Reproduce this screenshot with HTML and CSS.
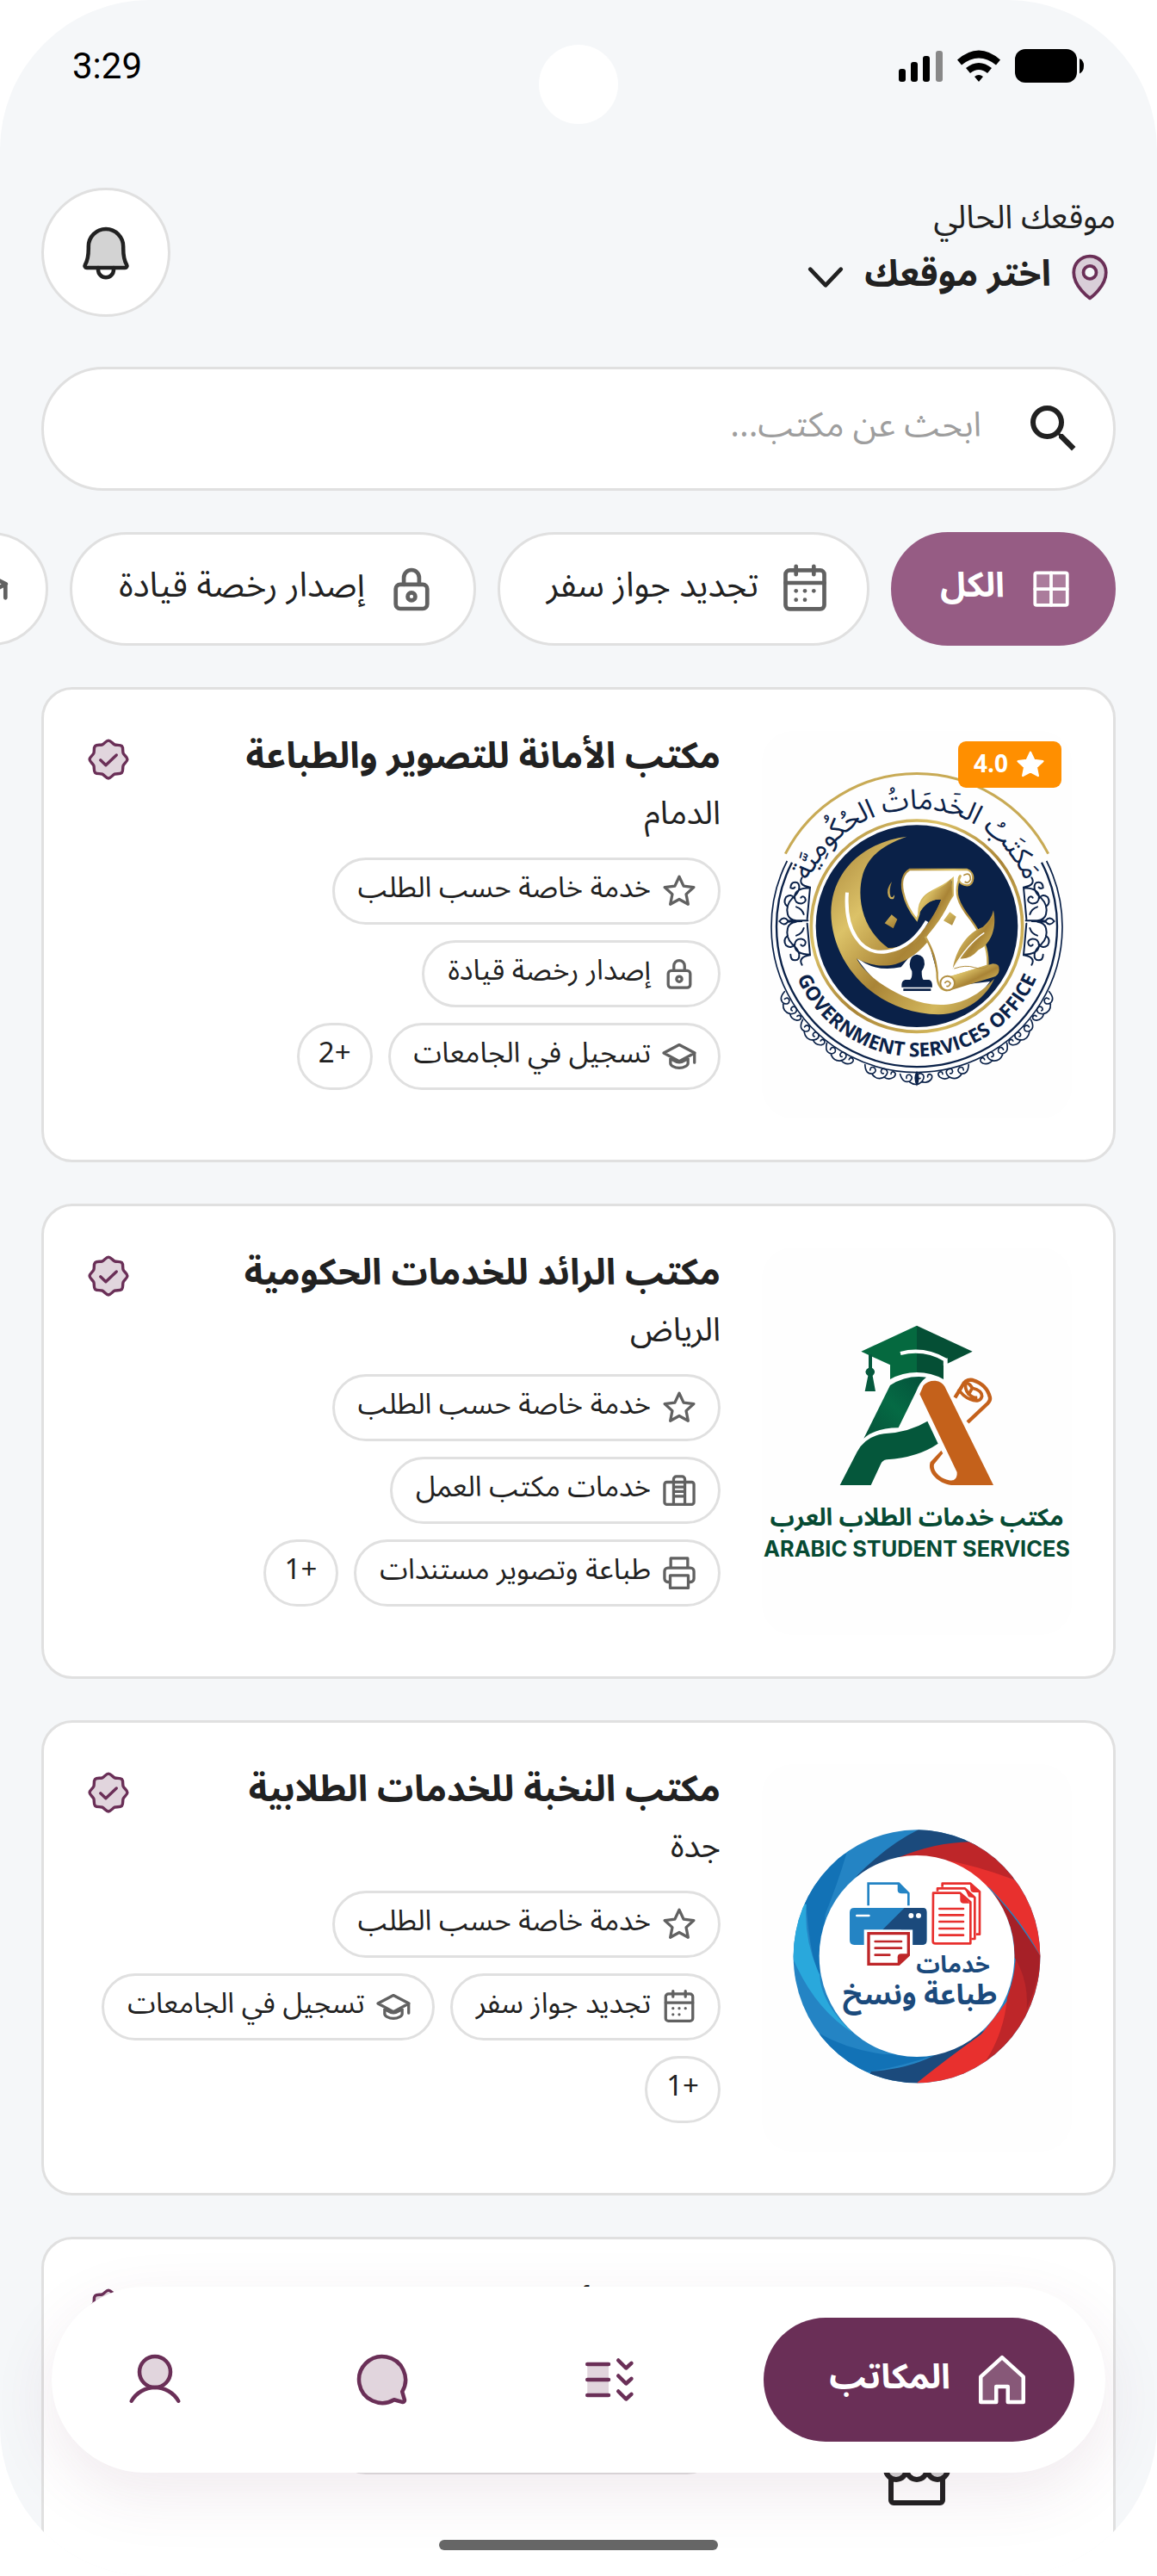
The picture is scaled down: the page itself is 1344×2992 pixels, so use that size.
FILE: index.html
```html
<!DOCTYPE html>
<html lang="ar" dir="rtl">
<head>
    <meta charset="UTF-8">
    <meta name="viewport" content="width=device-width, initial-scale=1.0">
    <title>المكاتب</title>
    <link rel="stylesheet" href="styles.css">
</head>
<body>
    <!-- icon sprite -->
    <svg class="sprite" aria-hidden="true">
        <symbol id="i-bell" viewBox="0 0 256 256">
            <path class="tone" d="M56.2,104a71.9,71.9,0,0,1,72.3-72c39.6.3,71.3,33.2,71.3,72.9V112c0,35.8,7.5,56.6,14.1,68a8,8,0,0,1-6.9,12H49a8,8,0,0,1-6.9-12.1c6.6-11.3,14.1-32.1,14.1-67.9Z"/>
            <path d="M56.2,104a71.9,71.9,0,0,1,72.3-72c39.6.3,71.3,33.2,71.3,72.9V112c0,35.8,7.5,56.6,14.1,68a8,8,0,0,1-6.9,12H49a8,8,0,0,1-6.9-12.1c6.6-11.3,14.1-32.1,14.1-67.9Z"/>
            <path d="M160,192v8a32,32,0,0,1-64,0v-8"/>
        </symbol>
        <symbol id="i-pin" viewBox="0 0 256 256">
            <path class="tone" fill-rule="evenodd" d="M208,104c0,72-80,128-80,128S48,176,48,104a80,80,0,0,1,160,0ZM128,72a32,32,0,1,0,0,64a32,32,0,0,0,0-64Z"/>
            <path d="M208,104c0,72-80,128-80,128S48,176,48,104a80,80,0,0,1,160,0Z"/>
            <circle cx="128" cy="104" r="32"/>
        </symbol>
        <symbol id="i-caret" viewBox="0 0 256 256"><path stroke-width="20" d="M204,88l-76,80L52,88"/></symbol>
        <symbol id="i-search" viewBox="0 0 24 24">
            <path class="solid" d="M15.5 14h-.79l-.28-.27A6.471 6.471 0 0 0 16 9.5 6.5 6.5 0 1 0 9.5 16c1.61 0 3.09-.59 4.23-1.57l.27.28v.79l5 4.99L20.49 19l-4.99-5zm-6 0C7.01 14 5 11.99 5 9.5S7.01 5 9.5 5 14 7.01 14 9.5 11.99 14 9.5 14z"/>
        </symbol>
        <symbol id="i-grid" viewBox="0 0 256 256">
            <rect class="tone" x="48" y="48" width="160" height="160" rx="8"/>
            <rect x="48" y="48" width="160" height="160" rx="8"/>
            <path d="M128,48V208M48,128H208"/>
        </symbol>
        <symbol id="i-calendar" viewBox="0 0 256 256">
            <rect x="32" y="36" width="192" height="192" rx="20"/>
            <path d="M84,16V56M172,16V56M32,98H224"/>
            <g class="solid"><circle cx="84" cy="138" r="10"/><circle cx="128" cy="138" r="10"/><circle cx="172" cy="138" r="10"/><circle cx="84" cy="182" r="10"/><circle cx="128" cy="182" r="10"/></g>
        </symbol>
        <symbol id="i-lock" viewBox="0 0 256 256">
            <rect x="50" y="106" width="156" height="120" rx="22"/>
            <path d="M90,106V72a38,38,0,0,1,76,0V106"/>
            <circle cx="128" cy="166" r="19"/>
        </symbol>
        <symbol id="i-cap" viewBox="0 0 256 256">
            <path d="M18,104L128,46L238,104L128,162ZM66,130V176c0,16,28,34,62,34s62-18,62-34V130M236,104V172"/>
            <path d="M70,148c12,0,26,22,58,22s46-22,58-22"/>
        </symbol>
        <symbol id="i-star" viewBox="0 0 256 256"><path d="M128,26L159,92L231,101L177,150L191,221L128,186L65,221L79,150L25,101L97,92Z"/></symbol>
        <symbol id="i-star-fill" viewBox="0 0 256 256"><path fill="currentColor" d="M128,26L159,92L231,101L177,150L191,221L128,186L65,221L79,150L25,101L97,92Z"/></symbol>
        <symbol id="i-office" viewBox="0 0 256 256">
            <rect x="24" y="70" width="208" height="158" rx="16"/>
            <path d="M88,70V50a20,20,0,0,1,20-20h40a20,20,0,0,1,20,20V70M88,70V228M168,70V228M88,104H168M88,136H168M88,170H168"/>
        </symbol>
        <symbol id="i-printer" viewBox="0 0 256 256">
            <path d="M68,92V24H188V92M62,192H48a24,24,0,0,1-24-24V116a24,24,0,0,1,24-24H208a24,24,0,0,1,24,24v52a24,24,0,0,1-24,24H194"/>
            <rect x="64" y="146" width="128" height="88"/>
        </symbol>
        <symbol id="i-seal" viewBox="0 0 256 256">
            <path class="tone" d="M54.5,201.5c-9.2-9.2-3.1-28.5-7.8-39.8S24,140.5,24,128s17.8-22,22.7-33.7-1.4-30.6,7.8-39.8S83,51.4,94.3,46.7,115.5,24,128,24s22,17.8,33.7,22.7,30.6-1.4,39.8,7.8,3.1,28.5,7.8,39.8S232,115.5,232,128s-17.8,22-22.7,33.7,1.4,30.6-7.8,39.8-28.5,3.1-39.8,7.8S140.5,232,128,232s-22-17.8-33.7-22.7S63.7,210.7,54.5,201.5Z"/>
            <path d="M54.5,201.5c-9.2-9.2-3.1-28.5-7.8-39.8S24,140.5,24,128s17.8-22,22.7-33.7-1.4-30.6,7.8-39.8S83,51.4,94.3,46.7,115.5,24,128,24s22,17.8,33.7,22.7,30.6-1.4,39.8,7.8,3.1,28.5,7.8,39.8S232,115.5,232,128s-17.8,22-22.7,33.7,1.4,30.6-7.8,39.8-28.5,3.1-39.8,7.8S140.5,232,128,232s-22-17.8-33.7-22.7S63.7,210.7,54.5,201.5Z"/>
            <path d="M172,104L113.3,160L84,132"/>
        </symbol>
        <symbol id="i-store" viewBox="0 0 256 256">
            <path class="tone" d="M96,96v16a32,32,0,0,1-64,0V96ZM224,96v16a32,32,0,0,1-64,0V96Z"/>
            <path d="M48,139.6V208a8,8,0,0,0,8,8H200a8,8,0,0,0,8-8V139.6M54,40H202a8.1,8.1,0,0,1,7.7,5.8L224,96H32L46.3,45.8A8.1,8.1,0,0,1,54,40ZM96,96v16a32,32,0,0,1-64,0V96M160,96v16a32,32,0,0,1-64,0V96M224,96v16a32,32,0,0,1-64,0V96"/>
        </symbol>
        <symbol id="i-house" viewBox="0 0 256 256">
            <path class="tone" d="M40,216V116L128,36L216,116V216H152V156H104V216Z"/>
            <path d="M40,220V116L128,36L216,116V220H152V156H104V220Z"/>
        </symbol>
        <symbol id="i-checks" viewBox="0 0 256 256">
            <rect class="tone" x="40" y="64" width="88" height="128"/>
            <path d="M40,64H128M40,128H128M40,192H128M168,48L200,80L222,60M168,112L200,144L222,124M168,176L200,208L222,188"/>
        </symbol>
        <symbol id="i-chat" viewBox="0 0 256 256">
            <path class="tone" d="M210.6,177A95.9,95.9,0,1,0,177,210.6L210.2,220a7.9,7.9,0,0,0,9.8-9.8Z"/>
            <path d="M210.6,177A95.9,95.9,0,1,0,177,210.6L210.2,220a7.9,7.9,0,0,0,9.8-9.8Z"/>
        </symbol>
        <symbol id="i-user" viewBox="0 0 256 256">
            <circle class="tone" cx="128" cy="96" r="64"/>
            <circle cx="128" cy="96" r="64"/>
            <path d="M31,216a112,112,0,0,1,194,0"/>
        </symbol>
    </svg>

    <div class="screen">
        <div class="status-bar" dir="ltr">
            <span class="clock">3:29</span>
            <span class="camera"></span>
            <svg class="status-icons" viewBox="0 0 216 40">
                <rect x="0" y="23" width="8" height="15" rx="3"/>
                <rect x="14" y="15" width="8" height="23" rx="3"/>
                <rect x="28" y="8" width="8" height="30" rx="3"/>
                <rect x="43" y="2" width="8" height="36" rx="3" fill="#888"/>
                <path d="M68,12.500q25-22,50,0l-5,6q-20-16-40,0zM78,22q15-12,30,0l-5,6q-10-8-20,0zM88,32q5-4,10,0l-5,6z"/>
                <rect x="135" y="0" width="72" height="39" rx="12"/>
                <path d="M210,11q5,2,5,8.500t-5,9z"/>
            </svg>
        </div>

        <header class="header">
            <div class="location">
                <span class="location-label">موقعك الحالي</span>
                <button type="button" class="location-picker">
                    <svg class="icon icon-60 purple"><use href="#i-pin"/></svg>
                    <span>اختر موقعك</span>
                    <svg class="icon icon-60"><use href="#i-caret"/></svg>
                </button>
            </div>
            <button type="button" class="bell" aria-label="الإشعارات">
                <svg class="icon icon-72"><use href="#i-bell"/></svg>
            </button>
        </header>

        <label class="search">
            <svg class="icon icon-72"><use href="#i-search"/></svg>
            <input type="text" placeholder="ابحث عن مكتب..." aria-label="بحث">
        </label>

        <div class="filters">
            <button type="button" class="filter active"><svg class="icon icon-60"><use href="#i-grid"/></svg><span>الكل</span></button>
            <button type="button" class="filter"><svg class="icon icon-60"><use href="#i-calendar"/></svg><span>تجديد جواز سفر</span></button>
            <button type="button" class="filter"><svg class="icon icon-60"><use href="#i-lock"/></svg><span>إصدار رخصة قيادة</span></button>
            <button type="button" class="filter"><svg class="icon icon-60"><use href="#i-cap"/></svg><span>تسجيل في الجامعات</span></button>
        </div>

        <main class="offices">
            <article class="card">
                <div class="photo">
                    <svg class="logo" viewBox="75 87 1080 1350" role="img" aria-label="Government Services Office">
                        <defs>
                            <linearGradient id="gold" x1="0" y1="0" x2="1" y2="1">
                                <stop offset="0" stop-color="#a8853a"/>
                                <stop offset=".3" stop-color="#dcc268"/>
                                <stop offset=".55" stop-color="#a98436"/>
                                <stop offset=".8" stop-color="#d3b75c"/>
                                <stop offset="1" stop-color="#9c7a35"/>
                            </linearGradient>
                            <path id="arc-top" d="M207,767A408,408,0,0,1,1023,767"/>
                            <path id="arc-bottom" d="M160,767A455,455,0,0,0,1070,767"/>
                            <g id="swirl" fill="none" stroke="#0a2148" stroke-width="5" stroke-linecap="round">
                                <path d="M-58,2q10,34,34,24q14-12,0-22q-14-2-12,12M-24,30q22,16,42-2q14-20-2-28q-16-2-14,12q4,8,10,4M16,28q20,8,34-8q8-14-4-18q-10,0-8,10"/>
                            </g>
                            <g id="side" fill="none" stroke="#0a2148" stroke-width="6" stroke-linecap="round">
                                <path d="M215,598q-16,26,28,34l-10,110M175,634q0-20,16-20t14,22q-4,18-24,34q-24,24-16,56q4,18,30,22h40M176,634q10,4,14-2M243,634q-50,0-54,30q0,26,26,24q18-6,10-20q-8-8-14,0M165,700q-18-14-6-34q18-14,30,4M195,700q20,6,26,26M136,750q16-20,30-2q10,0,50,2q-40,0-50,2q-14,18-30-2M215,902q-16-26,28-34l-10-110M175,866q0,20,16,20t14-22q-4-18-24-34q-24-24-16-56q4-18,30-22M243,866q-50,0-54-30q0-26,26-24q18,6,10,20q-8,8-14,0M165,800q-18,14-6,34q18,14,30-4M195,800q20-6,26-26"/>
                            </g>
                        </defs>
                        <path d="M157,515A515,515,0,0,1,1073,515" fill="none" stroke="#c8aa55" stroke-width="9"/>
                        <g fill="none" stroke="#0a2148">
                            <path d="M163,540A507,507,0,1,0,1067,540" stroke-width="5"/>
                            <path d="M180,545A489,489,0,1,0,1050,545" stroke-width="7"/>
                        </g>
                        <use href="#side"/>
                        <use href="#side" transform="translate(1230 0) scale(-1 1)"/>
                        <g transform="translate(615 765)">
                            <use href="#swirl" transform="rotate(57) translate(0 510)"/>
                            <use href="#swirl" transform="rotate(44) translate(0 510)"/>
                            <use href="#swirl" transform="rotate(31) translate(0 510)"/>
                            <use href="#swirl" transform="rotate(14) translate(0 512)"/>
                            <use href="#swirl" transform="translate(0 516)"/>
                            <use href="#swirl" transform="scale(-1 1) rotate(14) translate(0 512)"/>
                            <use href="#swirl" transform="scale(-1 1) rotate(31) translate(0 510)"/>
                            <use href="#swirl" transform="scale(-1 1) rotate(44) translate(0 510)"/>
                            <use href="#swirl" transform="scale(-1 1) rotate(57) translate(0 510)"/>
                            <path d="M0,506q-16,24,0,54q16-30,0-54z" fill="#0a2148"/>
                        </g>
                        <circle cx="615" cy="767" r="368" fill="#fff" stroke="url(#gold)" stroke-width="11"/>
                        <circle cx="615" cy="767" r="352" fill="#0a2148"/>
                        <path d="M400,870q60,60,160,40l90-110l50,180l170-20q-60,90-210,85q-160-20-260-175z" fill="#fff"/>
                        <path d="M580,455C450,470,318,560,316,720C318,900,470,1070,690,1075C790,1072,860,1010,885,950C800,1040,720,1050,640,1035C520,1005,430,930,405,880C440,900,490,912,540,900C640,870,700,770,738,660C740,640,738,620,734,602C700,650,620,640,622,725C640,690,670,670,700,675C660,770,590,845,515,843C440,790,410,700,420,620C430,540,480,490,580,455Z" fill="url(#gold)"/>
                        <path d="M372,650C362,780,420,870,510,856C580,845,620,800,650,750" fill="none" stroke="#fff" stroke-width="12"/>
                        <path d="M590,570H790C820,580,815,625,790,625C760,622,755,600,768,590C740,650,760,690,800,740C850,810,865,850,862,905L735,945Q700,960,715,990C690,985,685,960,686,930C680,880,670,850,645,805L740,660V602C690,650,620,640,622,725L615,745C570,690,540,600,590,570Z" fill="#fff" stroke="url(#gold)" stroke-width="7"/>
                        <path d="M734,602C700,650,620,640,622,725C640,690,670,670,700,675C670,750,630,800,600,830L650,800C690,760,725,700,738,660Z" fill="url(#gold)"/>
                        <path d="M720,945L880,898Q905,898,902,920Q900,940,880,945L725,993Q740,960,720,945Z" fill="url(#gold)"/>
                        <circle cx="722" cy="966" r="25" fill="#fff" stroke="#b18e40" stroke-width="6"/>
                        <path d="M712,966q10-14,20,0q-4,14-14,10" fill="none" stroke="#b18e40" stroke-width="5"/>
                        <path d="M778,590q24-14,24,14q-8,18-20,8" fill="none" stroke="#b18e40" stroke-width="5"/>
                        <path d="M740,918C750,850,790,790,845,770Q875,745,882,712C895,770,875,830,830,850Q800,885,765,880Z" fill="url(#gold)"/>
                        <path d="M740,918Q790,830,850,790" fill="none" stroke="#fff" stroke-width="4"/>
                        <path d="M745,915q40-14,70-4t50-6" fill="none" stroke="#b18e40" stroke-width="3"/>
                        <path d="M527,727l20,16-14,32-30-18zM730,718l22,16-14,30-30-16zM528,612q-22,26-12,52q6,12,18,8q6-8,2-14q-4,14-12,6q-8-20,4-52z" fill="url(#gold)"/>
                        <path d="M615,866q28,2,27,34q-2,14-10,24q0,24,6,30h20q12,4,11,26H562q-2-22,12-26h18q8-8,6-30q-8-10-8-24q2-32,25-34zM568,985h96v8h-96z" fill="#0a2148"/>
                        <text class="seal-ar" text-anchor="middle"><textPath href="#arc-top" startOffset="50%">مَكتَبُ الخَدمَاتُ الحُكُومِيَّة</textPath></text>
                        <text class="seal-en" direction="ltr" text-anchor="middle"><textPath href="#arc-bottom" startOffset="50%">GOVERNMENT SERVICES OFFICE</textPath></text>
                    </svg>
                    <span class="rating"><svg class="icon icon-36"><use href="#i-star-fill"/></svg>4.0</span>
                </div>
                <div class="info">
                    <div class="title-row">
                        <h2>مكتب الأمانة للتصوير والطباعة</h2>
                        <svg class="icon icon-54 purple"><use href="#i-seal"/></svg>
                    </div>
                    <p class="city">الدمام</p>
                    <ul class="tags">
                        <li><svg class="icon icon-42"><use href="#i-star"/></svg><span>خدمة خاصة حسب الطلب</span></li>
                        <li><svg class="icon icon-42"><use href="#i-lock"/></svg><span>إصدار رخصة قيادة</span></li>
                        <li><svg class="icon icon-42"><use href="#i-cap"/></svg><span>تسجيل في الجامعات</span></li>
                        <li class="more"><span>+2</span></li>
                    </ul>
                </div>
            </article>

            <article class="card">
                <div class="photo">
                    <svg class="logo" viewBox="75 -93 1080 1350" role="img" aria-label="Arabic Student Services">
                        <defs>
                            <linearGradient id="leg" x1="0" y1="1" x2="1" y2="0">
                                <stop offset="0" stop-color="#065239"/>
                                <stop offset=".5" stop-color="#056a44"/>
                                <stop offset="1" stop-color="#04503a"/>
                            </linearGradient>
                        </defs>
                        <path d="M615,179L421,269L522,316V366Q565,342,615,342Z" fill="#05693f"/>
                        <path d="M615,179L809,269L722,311V292L708,299V366Q665,342,615,342Z" fill="#054f35"/>
                        <path d="M558,276Q640,255,714,298V318" fill="none" stroke="#fff" stroke-width="13"/>
                        <path d="M447,280H459V326Q470,334,468,343Q466,350,461,354L471,408H434L445,354Q436,348,436,340Q438,330,447,326Z" fill="#05593d"/>
                        <path d="M522,387Q580,350,648,359Q625,375,612,410L551,535Q470,536,430,572Z" fill="url(#leg)"/>
                        <path d="M347,735L407,619Q435,565,500,556Q590,550,652,512L689,590Q620,638,510,646Q495,648,489,662L455,735Z" fill="#05573b"/>
                        <path d="M625,418L638,388Q652,370,680,371Q703,374,712,391L882,735H735C690,730,650,690,662,655L700,614L706,624L675,662C668,690,710,722,742,718Q757,710,755,690Z" fill="#c4611b"/>
                        <path d="M748,430L774,388Q785,365,810,369Q860,385,870,430Q872,440,862,450L792,516" fill="none" stroke="#c4611b" stroke-width="13"/>
                        <path d="M760,400Q775,425,800,435Q835,450,842,425Q842,405,808,397L796,418Q812,432,826,430M808,395Q800,382,786,376Q780,400,796,418" fill="none" stroke="#c4611b" stroke-width="11"/>
                        <text class="student-ar" x="615" y="876" text-anchor="middle">مكتب خدمات الطلاب العرب</text>
                        <text class="student-en" x="615" y="983" direction="ltr" text-anchor="middle">ARABIC STUDENT SERVICES</text>
                    </svg>
                </div>
                <div class="info">
                    <div class="title-row">
                        <h2>مكتب الرائد للخدمات الحكومية</h2>
                        <svg class="icon icon-54 purple"><use href="#i-seal"/></svg>
                    </div>
                    <p class="city">الرياض</p>
                    <ul class="tags">
                        <li><svg class="icon icon-42"><use href="#i-star"/></svg><span>خدمة خاصة حسب الطلب</span></li>
                        <li><svg class="icon icon-42"><use href="#i-office"/></svg><span>خدمات مكتب العمل</span></li>
                        <li><svg class="icon icon-42"><use href="#i-printer"/></svg><span>طباعة وتصوير مستندات</span></li>
                        <li class="more"><span>+1</span></li>
                    </ul>
                </div>
            </article>

            <article class="card">
                <div class="photo">
                    <svg class="logo" viewBox="15 -93 1080 1350" role="img" aria-label="خدمات طباعة ونسخ">
                        <defs>
                            <clipPath id="ring"><ellipse cx="555" cy="577" rx="430" ry="441"/></clipPath>
                            <clipPath id="printer-body"><path d="M337,408H575Q590,408,590,424V520Q590,537,574,537H541V484H371V537H337Q321,537,321,520V424Q321,408,337,408Z"/></clipPath>
                        </defs>
                        <g clip-path="url(#ring)">
                            <rect x="100" y="100" width="910" height="940" fill="#2484c4"/>
                            <path d="M560,100L760,100V190L500,230Q410,250,340,302Q450,190,560,136Z" fill="#1b4a7c"/>
                            <path d="M310,218L100,218V395H170Q180,560,216,650L236,430Q280,320,310,218Z" fill="#1272b6"/>
                            <path d="M170,395H100V600L126,590Q200,760,330,842Q220,740,216,640Q160,520,170,395Z" fill="#29a8dc"/>
                            <path d="M215,845L200,1000L395,978Q500,960,620,920L440,918Q310,900,215,845Z" fill="#1272b6"/>
                            <path d="M395,978L380,1040H555L800,830L610,925Q520,970,395,978Z" fill="#1b4a7c"/>
                            <path d="M555,1018V1060H800V940Q860,860,880,720L780,848Q650,940,555,1018Z" fill="#e8302e"/>
                            <path d="M795,942L1010,1000V575L900,560Q900,640,870,720Q860,840,795,942Z" fill="#be2629"/>
                            <path d="M985,575Q980,670,938,760Q945,660,895,580Q900,450,800,335Q890,420,985,575Z" fill="#a62027"/>
                            <path d="M895,310L1010,300V575H985Q920,450,810,340L650,238Q780,260,895,310Z" fill="#e8302e"/>
                            <path d="M740,178L800,120L895,310Q760,260,640,238L492,232Q620,180,740,178Z" fill="#be2629"/>
                        </g>
                        <ellipse cx="555" cy="576" rx="340" ry="351" fill="#fff"/>
                        <path d="M386,400V323H492L526,357V400" fill="none" stroke="#2484c4" stroke-width="8"/>
                        <path d="M488,320L528,358H502Q488,358,488,346Z" fill="#2484c4"/>
                        <g clip-path="url(#printer-body)">
                            <rect x="321" y="408" width="270" height="130" fill="#2484c4"/>
                            <path d="M512,408H600V540H500V484H436Z" fill="#1b4a7c"/>
                        </g>
                        <rect x="342" y="431" width="50" height="8" rx="4" fill="#fff"/>
                        <circle cx="535" cy="435" r="9" fill="#fff"/>
                        <circle cx="561" cy="435" r="9" fill="#fff"/>
                        <path d="M387,497H526V572L492,604H387Z" fill="#fff" stroke="#be2629" stroke-width="10"/>
                        <path d="M488,606V580Q488,568,500,568H530Z" fill="#be2629"/>
                        <path d="M410,525H501M410,548H501M410,572H460" stroke="#be2629" stroke-width="8" stroke-linecap="round"/>
                        <g fill="#fff" stroke="#e8302e" stroke-width="8" stroke-linejoin="round">
                            <path d="M644,335V323H742L774,352V500H762"/>
                            <path d="M627,350V340H722L757,372V516H745"/>
                            <path d="M612,356H706L742,388V532H620Q611,532,611,524Z"/>
                        </g>
                        <path d="M706,356L740,392H716Q706,390,706,380ZM722,340L760,374L735,370ZM740,320L778,354H752Q742,352,742,342Z" fill="#e8302e"/>
                        <path d="M634,411H717M634,433H717M634,456H717M634,480H717M634,503H717" stroke="#e8302e" stroke-width="8" stroke-linecap="round"/>
                        <text class="print-ar" x="681" y="632" font-size="82" text-anchor="middle">خدمات</text>
                        <text class="print-ar" x="566" y="745" font-size="100" text-anchor="middle">طباعة ونسخ</text>
                    </svg>
                </div>
                <div class="info">
                    <div class="title-row">
                        <h2>مكتب النخبة للخدمات الطلابية</h2>
                        <svg class="icon icon-54 purple"><use href="#i-seal"/></svg>
                    </div>
                    <p class="city">جدة</p>
                    <ul class="tags">
                        <li><svg class="icon icon-42"><use href="#i-star"/></svg><span>خدمة خاصة حسب الطلب</span></li>
                        <li><svg class="icon icon-42"><use href="#i-calendar"/></svg><span>تجديد جواز سفر</span></li>
                        <li><svg class="icon icon-42"><use href="#i-cap"/></svg><span>تسجيل في الجامعات</span></li>
                        <li class="more"><span>+1</span></li>
                    </ul>
                </div>
            </article>

            <article class="card">
                <div class="photo photo-empty">
                    <svg class="icon icon-96"><use href="#i-store"/></svg>
                </div>
                <div class="info">
                    <div class="title-row">
                        <h2>مكتب الأمل</h2>
                        <svg class="icon icon-54 purple"><use href="#i-seal"/></svg>
                    </div>
                    <p class="city">جدة</p>
                    <ul class="tags">
                        <li><svg class="icon icon-42"><use href="#i-star"/></svg><span>خدمة خاصة حسب الطلب</span></li>
                    </ul>
                </div>
            </article>
        </main>

        <nav class="tab-bar">
            <a href="#offices" class="tab active"><svg class="icon icon-72"><use href="#i-house"/></svg><span>المكاتب</span></a>
            <a href="#orders" class="tab" aria-label="الطلبات"><svg class="icon icon-72"><use href="#i-checks"/></svg></a>
            <a href="#chat" class="tab" aria-label="المحادثات"><svg class="icon icon-72"><use href="#i-chat"/></svg></a>
            <a href="#profile" class="tab" aria-label="حسابي"><svg class="icon icon-72"><use href="#i-user"/></svg></a>
        </nav>
        <div class="home-indicator"></div>
    </div>
</body>
</html>
```
FILE: styles.css
```css
* {
    box-sizing: border-box;
}

body {
    margin: 0;
    background: #fff;
    color: #212121;
    font-family: "Noto Sans Arabic", "Noto Sans", sans-serif;
}

button,
input {
    font-family: inherit;
    color: inherit;
}

button {
    cursor: pointer;
}

.sprite {
    display: none;
}

/* icons */
.icon {
    flex: none;
    fill: none;
    stroke: currentColor;
    stroke-width: 16;
    stroke-linecap: round;
    stroke-linejoin: round;
}

.icon-36 { width: 36px; height: 36px; }
.icon-42 { width: 42px; height: 42px; }
.icon-54 { width: 54px; height: 54px; }
.icon-60 { width: 60px; height: 60px; }
.icon-72 { width: 72px; height: 72px; }
.icon-96 { width: 96px; height: 96px; }

.tone {
    fill: currentColor;
    opacity: 0.2;
    stroke: none;
}

.solid {
    fill: currentColor;
    stroke: none;
}

.purple {
    color: #6a2f57;
}

/* app shell */
.screen {
    position: relative;
    height: 100vh;
    overflow: hidden;
    background: #f5f7f9;
    border-radius: 174px;
}

.status-bar {
    display: flex;
    align-items: center;
    justify-content: space-between;
    height: 154px;
    margin-bottom: 64px;
    padding: 0 84px;
    color: #000;
}

.clock {
    font-family: Roboto, sans-serif;
    font-size: 42px;
    line-height: 48px;
}

.camera {
    position: absolute;
    top: 52px;
    left: 50%;
    width: 92px;
    height: 92px;
    margin-left: -46px;
    border-radius: 50%;
    background: #fff;
}

.status-icons {
    width: 216px;
    height: 40px;
}

.header {
    display: flex;
    align-items: center;
    justify-content: space-between;
    padding: 0 48px;
}

.location {
    display: flex;
    flex-direction: column;
    align-items: flex-start;
    gap: 3px;
    padding-bottom: 6px;
}

.location-label {
    font-size: 38px;
    line-height: 60px;
}

.location-picker {
    display: flex;
    align-items: center;
    gap: 15px;
    padding: 0;
    border: 0;
    background: none;
    font-size: 42px;
    font-weight: 700;
    line-height: 66px;
}

.location-picker span,
.filter span,
.tags span,
.tab span {
    padding-bottom: 6px;
}

.bell {
    display: grid;
    place-items: center;
    width: 150px;
    height: 150px;
    padding: 0;
    border: 3px solid #e0e0e0;
    border-radius: 50%;
    background: #fff;
}

.search {
    display: flex;
    align-items: center;
    gap: 48px;
    height: 144px;
    margin: 58px 48px 48px;
    padding: 0 33px;
    border: 3px solid #e0e0e0;
    border-radius: 72px;
    background: #fff;
}

.search input {
    flex: 1;
    min-width: 0;
    padding: 0 0 6px;
    border: 0;
    outline: 0;
    background: none;
    font-size: 40px;
    line-height: 60px;
}

.search input::placeholder {
    color: #9e9e9e;
    opacity: 1;
}

.filters {
    display: flex;
    gap: 25px;
    padding: 0 48px;
    overflow: hidden;
}

.filter {
    display: flex;
    flex: none;
    align-items: center;
    gap: 24px;
    height: 132px;
    padding: 0 42px 0 54px;
    border: 3px solid #e0e0e0;
    border-radius: 66px;
    background: #fff;
    font-size: 40px;
    line-height: 60px;
}

.filter .icon {
    color: #616161;
    stroke-width: 20;
}

.filter.active {
    border-color: #965c84;
    background: #965c84;
    color: #fff;
    font-weight: 700;
}

.filter.active .icon {
    color: #fff;
    stroke-width: 16;
}

/* office cards */
.offices {
    display: flex;
    flex-direction: column;
    gap: 48px;
    padding: 48px;
}

.card {
    display: flex;
    gap: 48px;
    padding: 48px;
    border: 3px solid #e0e0e0;
    border-radius: 36px;
    background: #fff;
}

.photo {
    position: relative;
    flex: none;
    width: 360px;
    height: 450px;
    border-radius: 36px;
    background: #fefefe;
}

.photo-empty {
    display: grid;
    place-items: center;
    background: #fff;
}

.logo {
    display: block;
    width: 100%;
    height: 100%;
}

.rating {
    position: absolute;
    top: 12px;
    right: 12px;
    display: flex;
    align-items: center;
    gap: 8px;
    height: 54px;
    padding: 0 18px;
    border-radius: 9px;
    background: #ff8f00;
    color: #fff;
    font-size: 28px;
    font-weight: 700;
}

.info {
    flex: 1;
    min-width: 0;
}

.title-row {
    display: flex;
    align-items: center;
    justify-content: space-between;
    height: 66px;
}

h2 {
    margin: 0;
    padding-bottom: 6px;
    font-size: 42px;
    line-height: 66px;
    white-space: nowrap;
}

.city {
    margin: 0 0 21px;
    font-size: 38px;
    line-height: 60px;
}

.tags {
    display: flex;
    flex-wrap: wrap;
    gap: 18px;
    margin: 0;
    padding: 0;
    list-style: none;
}

.tags li {
    display: flex;
    align-items: center;
    gap: 12px;
    height: 78px;
    padding: 0 24px 0 27px;
    border: 3px solid #e0e0e0;
    border-radius: 39px;
    font-size: 33px;
    line-height: 48px;
}

.tags .more {
    padding: 0 22px;
}

.tags .icon {
    color: #616161;
    stroke-width: 20;
}

/* lettering in the logos */
.seal-ar {
    fill: #0a2148;
    font-size: 96px;
}

.seal-en {
    fill: #0a2148;
    font-family: "Open Sans", sans-serif;
    font-size: 68px;
    font-weight: 700;
}

.student-ar {
    fill: #064a33;
    font-size: 84px;
    font-weight: 700;
}

.student-en {
    fill: #064a33;
    font-family: Inter, sans-serif;
    font-size: 76px;
    font-weight: 700;
}

.print-ar {
    fill: #1b4a7c;
    font-weight: 700;
}

/* bottom bar */
.tab-bar {
    position: absolute;
    right: 60px;
    bottom: 120px;
    left: 60px;
    display: flex;
    align-items: center;
    justify-content: space-between;
    height: 216px;
    padding: 36px;
    border-radius: 108px;
    background: #fff;
    box-shadow: 0 24px 72px rgba(106, 47, 87, 0.1);
}

.tab {
    display: flex;
    align-items: center;
    gap: 24px;
    height: 144px;
    padding: 0 48px;
    border-radius: 72px;
    color: #6a2f57;
    font-size: 40px;
    font-weight: 700;
    text-decoration: none;
}

.tab.active {
    padding-left: 76px;
    background: #6a2f57;
    color: #fff;
}

.home-indicator {
    position: absolute;
    bottom: 30px;
    left: 50%;
    width: 324px;
    height: 12px;
    margin-left: -162px;
    border-radius: 6px;
    background: #666;
}
```
